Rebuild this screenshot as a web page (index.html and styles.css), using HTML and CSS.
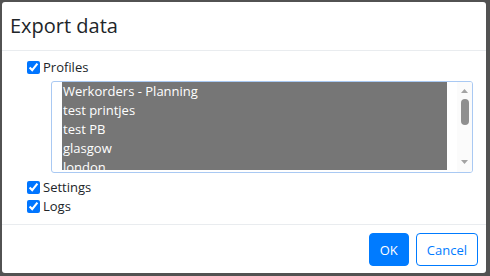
FILE: index.html
```html
<!DOCTYPE html>
<html>
<head>
<meta charset="utf-8">
<link rel="stylesheet" href="styles.css">
</head>
<body>
<div class="dialog">
  <div class="header"><h5 class="title">Export data</h5></div>
  <div class="content">
    <label class="row"><input type="checkbox" checked><span>Profiles</span></label>
    <div class="listbox">
      <div class="items">
        <div class="item">Werkorders - Planning</div>
        <div class="item">test printjes</div>
        <div class="item">test PB</div>
        <div class="item">glasgow</div>
        <div class="item">london</div>
      </div>
      <svg class="scrollbar" width="15" height="90" viewBox="0 0 15 90">
        <rect x="0" y="0" width="15" height="90" fill="#fbfbfb"/>
        <polygon points="4,11 7.5,7 11,11" fill="#a3a3a3"/>
        <rect x="4" y="17" width="8" height="26" rx="4" fill="#8f8f8f"/>
        <polygon points="4,78 11,78 7.5,82" fill="#a3a3a3"/>
      </svg>
    </div>
    <label class="row row-after"><input type="checkbox" checked><span>Settings</span></label>
    <label class="row"><input type="checkbox" checked><span>Logs</span></label>
  </div>
  <div class="footer">
    <button class="btn btn-primary">OK</button>
    <button class="btn btn-outline">Cancel</button>
  </div>
</div>
</body>
</html>
```
FILE: styles.css
```css
* { box-sizing: border-box; }
html, body { margin: 0; padding: 0; }
body {
  width: 490px;
  height: 276px;
  background: #525252;
  font-family: "Open Sans", "Noto Sans", sans-serif;
  color: #212529;
  overflow: hidden;
}
.dialog {
  margin: 2px 4px 3px 2px;
  height: 271px;
  background: #fff;
  border-radius: 3px;
  display: flex;
  flex-direction: column;
}
.header {
  padding: 9px 8px;
  border-bottom: 1px solid #e9ecef;
}
.title {
  margin: 0;
  font-size: 20px;
  line-height: 30px;
  font-weight: 500;
  color: #212529;
}
.content {
  flex: 1;
  padding: 7px 0 0 25px;
  font-size: 13px;
}
.row {
  display: flex;
  align-items: center;
  height: 19px;
  gap: 3px;
  line-height: 19px;
}
.row input {
  margin: 0;
  width: 13px;
  height: 13px;
}
.row-after { margin-top: 5px; }
.listbox {
  margin: 4px 0 0 24px;
  width: 422px;
  height: 92px;
  border: 1px solid #a9c9f3;
  border-radius: 3px;
  display: flex;
  overflow: hidden;
}
.items {
  flex: 1;
  padding: 0 10px;
  height: 88px;
  overflow: hidden;
}
.item {
  height: 19px;
  line-height: 19px;
  background: #767676;
  color: #fff;
  padding-left: 1px;
  font-size: 13px;
  white-space: nowrap;
}
.scrollbar { display: block; flex: none; }
.footer {
  border-top: 1px solid #e9ecef;
  display: flex;
  justify-content: flex-end;
  align-items: center;
  gap: 7px;
  padding: 1px 8px 0 0;
  height: 49px;
}
.btn {
  height: 33px;
  padding: 0 10px;
  font-family: "Open Sans", "Noto Sans", sans-serif;
  font-size: 13px;
  border-radius: 4px;
  border: 1px solid #007bff;
  display: inline-flex;
  align-items: center;
  justify-content: center;
}
.btn-primary { background: #007bff; color: #fff; }
.btn-outline { background: #fff; color: #007bff; }
```
